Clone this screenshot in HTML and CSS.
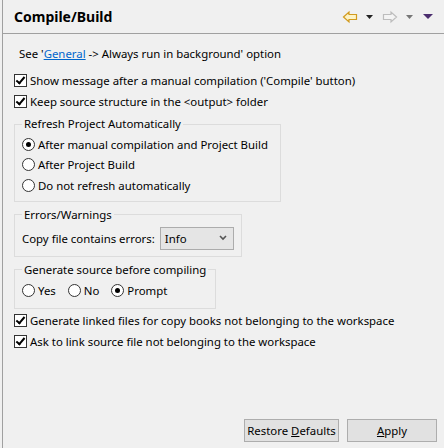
FILE: index.html
```html
<!DOCTYPE html>
<html lang="en">
<head>
    <meta charset="UTF-8">
    <title>Compile/Build</title>
    <link rel="stylesheet" href="styles.css">
</head>
<body>
    <div class="page">
        <div class="header">
            <h1>Compile/Build</h1>
            <div class="nav">
                <svg width="16" height="16" viewBox="0 0 16 16"><path d="M1.5 8 L7 3 V5.5 H14.5 V10.5 H7 V13 Z" fill="#fdf3c6" stroke="#d29b1e" stroke-width="1.2" stroke-linejoin="miter"/></svg>
                <svg class="tri" width="7" height="4" viewBox="0 0 7 4"><path d="M0 0 H7 L3.5 4 Z" fill="#222"/></svg>
                <svg class="fwd" width="16" height="16" viewBox="0 0 16 16"><path d="M14.5 8 L9 3 V5.5 H1.5 V10.5 H9 V13 Z" fill="#f4f4f4" stroke="#bdbdbd" stroke-width="1.2"/></svg>
                <svg class="tri" width="7" height="4" viewBox="0 0 7 4"><path d="M0 0 H7 L3.5 4 Z" fill="#777"/></svg>
                <svg class="menu" width="10" height="5" viewBox="0 0 10 5"><path d="M0 0 H10 L5 5 Z" fill="#4b2d6e"/></svg>
            </div>
        </div>

        <div class="content">
            <p class="note">See '<a href="#">General</a> -&gt; Always run in background' option</p>

            <div class="check"><span class="box on"></span>Show message after a manual compilation ('Compile' button)</div>
            <div class="check"><span class="box on"></span>Keep source structure in the &lt;output&gt; folder</div>

            <fieldset class="group refresh">
                <legend>Refresh Project Automatically</legend>
                <div class="radio"><span class="dot on"></span>After manual compilation and Project Build</div>
                <div class="radio"><span class="dot"></span>After Project Build</div>
                <div class="radio"><span class="dot"></span>Do not refresh automatically</div>
            </fieldset>

            <fieldset class="group errors">
                <legend>Errors/Warnings</legend>
                <div class="field">
                    <span>Copy file contains errors:</span>
                    <div class="select">Info
                        <svg width="8" height="6" viewBox="0 0 8 6"><path d="M1 1 L4 4 L7 1" fill="none" stroke="#555" stroke-width="1.6"/></svg>
                    </div>
                </div>
            </fieldset>

            <fieldset class="group generate">
                <legend>Generate source before compiling</legend>
                <div class="radios">
                    <div class="radio"><span class="dot"></span>Yes</div>
                    <div class="radio"><span class="dot"></span>No</div>
                    <div class="radio"><span class="dot on"></span>Prompt</div>
                </div>
            </fieldset>

            <div class="check first"><span class="box on"></span>Generate linked files for copy books not belonging to the workspace</div>
            <div class="check"><span class="box on"></span>Ask to link source file not belonging to the workspace</div>
        </div>

        <div class="buttons">
            <button class="restore">Restore <u>D</u>efaults</button>
            <button class="apply"><u>A</u>pply</button>
        </div>
    </div>
</body>
</html>
```

FILE: styles.css
```css
body {
    margin: 0;
    background-color: #f0f0f0;
    font-family: "Noto Sans", sans-serif;
    font-size: 11.4px;
    color: #000;
    white-space: nowrap;
}

.page {
    margin-left: 2px;
    border-left: 1px solid #a0a0a0;
    height: 448px;
    box-sizing: border-box;
    display: flex;
    flex-direction: column;
}

.header {
    height: 33px;
    border-bottom: 1px solid #a0a0a0;
    display: flex;
    align-items: center;
    padding-left: 11px;
}

h1 {
    margin: 0;
    font-size: 14px;
    font-weight: bold;
    flex: 1;
}

.nav {
    display: flex;
    align-items: center;
    margin-right: 11px;
}

.nav .tri {
    margin: 0 6px 0 8px;
}

.nav .fwd {
    margin-left: 3px;
}

.nav .menu {
    margin-left: 4px;
}

.content {
    padding-left: 11px;
}

.note {
    margin: 10px 0 6px 5px;
    line-height: 20px;
}

.note a {
    color: #0066cc;
}

.check {
    display: flex;
    align-items: center;
    height: 21px;
}

.check.first {
    margin-top: 1px;
}

.box {
    flex: none;
    width: 11px;
    height: 11px;
    border: 1px solid #333;
    background-color: #fff;
    margin-right: 3px;
    position: relative;
}

.box.on::after {
    content: "";
    position: absolute;
    left: 3px;
    top: 0px;
    width: 3px;
    height: 7px;
    border: solid #000;
    border-width: 0 2px 2px 0;
    transform: rotate(40deg);
}

.group {
    margin: 0;
    border: 1px solid #dcdcdc;
    padding: 0 7px;
    box-sizing: border-box;
}

.group legend {
    padding: 0 2px;
    margin-left: 0;
    line-height: 16px;
}

.refresh {
    width: 267px;
    margin-top: 4px;
    padding-top: 2px;
    padding-bottom: 5px;
}

.errors {
    width: 227px;
    margin-top: 5px;
    padding-top: 4px;
    padding-bottom: 6px;
}

.generate {
    width: 198px;
    margin-top: 5px;
    padding-top: 3px;
    padding-bottom: 7px;
}

.radio {
    display: flex;
    align-items: center;
    height: 20.5px;
}

.dot {
    flex: none;
    width: 11px;
    height: 11px;
    border: 1px solid #333;
    border-radius: 50%;
    background-color: #fff;
    margin-right: 3px;
    position: relative;
}

.dot.on::after {
    content: "";
    position: absolute;
    left: 3px;
    top: 3px;
    width: 5px;
    height: 5px;
    border-radius: 50%;
    background-color: #000;
}

.radios {
    display: flex;
    gap: 12px;
}

.field {
    display: flex;
    align-items: center;
    gap: 5px;
}

.select {
    width: 74px;
    height: 23px;
    box-sizing: border-box;
    border: 1px solid #acacac;
    background-color: #e5e5e5;
    display: flex;
    align-items: center;
    justify-content: space-between;
    padding: 0 6px 0 4px;
}

.buttons {
    margin-top: auto;
    display: flex;
    justify-content: flex-end;
    gap: 8px;
    padding: 0 7px 6px 0;
}

button {
    height: 23px;
    background-color: #e1e1e1;
    border: 1px solid #adadad;
    font-family: inherit;
    font-size: 11.4px;
    padding: 0;
    white-space: nowrap;
}

.restore {
    width: 95px;
}

.apply {
    width: 90px;
}
```
